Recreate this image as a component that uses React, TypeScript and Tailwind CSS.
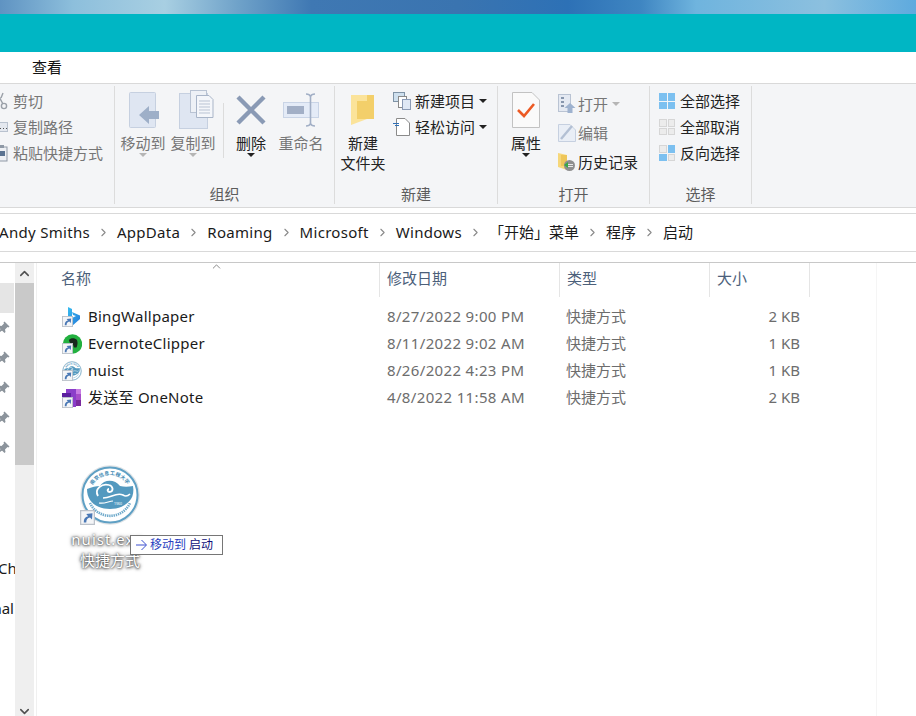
import React from "react";
import { ChevronRight, ChevronUp, ChevronDown } from "lucide-react";

const FONT = { fontFamily: '"Noto Sans", "Noto Sans CJK SC", sans-serif' };

const files = [
  { name: "BingWallpaper", date: "8/27/2022 9:00 PM", size: "2 KB", icon: "bing" },
  { name: "EvernoteClipper", date: "8/11/2022 9:02 AM", size: "1 KB", icon: "evernote" },
  { name: "nuist", date: "8/26/2022 4:23 PM", size: "1 KB", icon: "nuist" },
  { name: "发送至 OneNote", date: "4/8/2022 11:58 AM", size: "2 KB", icon: "onenote" },
];

const crumbs = [
  { label: "Andy Smiths", latin: true },
  { label: "AppData", latin: true },
  { label: "Roaming", latin: true },
  { label: "Microsoft", latin: true },
  { label: "Windows", latin: true },
  { label: "「开始」菜单", latin: false },
  { label: "程序", latin: false },
  { label: "启动", latin: false },
];

const ShortcutBadge = ({ size = 11 }: { size?: number }) => (
  <svg width={size} height={size} viewBox="0 0 12 12" className="absolute left-0 bottom-0">
    <rect x="0.5" y="0.5" width="11" height="11" fill="#f4f5f7" stroke="#bcc2ca" />
    <path d="M3 10 C3 7 4 5.5 6.5 5 L5 3.2 L10 2.6 L9.6 7.6 L8 6 C6 6.4 5 7.6 5 10 Z" fill="#4a78b5" />
  </svg>
);

const NuistLogo = ({ size }: { size: number }) => (
  <svg width={size} height={size} viewBox="0 0 60 60">
    <defs>
      <path id="logoTop" d="M12.7 20 A20 20 0 0 1 47.3 20" />
    </defs>
    <circle cx="30" cy="30" r="29.8" fill="#dfe3e6" />
    <circle cx="30" cy="30" r="27.5" fill="#fff" stroke="#5fa0c4" strokeWidth="2" />
    <text fontSize="5" fill="#3f8ab4" fontWeight="700" fontFamily="Noto Sans CJK SC, sans-serif">
      <textPath href="#logoTop" textLength="41">南京信息工程大学</textPath>
    </text>
    <path
      d="M7 24 C12 22 16 21 20 21 C24 14 35 14 40 21 C44 22 48 22 53 21 C54 26 53 31 51 34 C46 41 38 44 30 44 C22 44 14 41 10 35 C8 32 7 28 7 24 Z"
      fill="#5399bf"
    />
    <path d="M18 31 C14 24 22 18 29 20 C33 21 34 26 30 27 C27 27 27 24 29 24" stroke="#fff" strokeWidth="1.8" fill="none" />
    <path d="M23 33 C31 33 36 27 43 30 C46 32 48 31 50 29" stroke="#fff" strokeWidth="1.6" fill="none" />
    <path d="M19 38 C25 39 29 36 33 36" stroke="#fff" strokeWidth="1.2" fill="none" />
    <text x="34" y="39.5" fontSize="3.5" fill="#fff" fontFamily="Noto Sans, sans-serif">1960</text>
    <path d="M10 38 A22 22 0 0 0 50 38" stroke="#6faacb" strokeWidth="2.6" strokeDasharray="1.4 0.8" fill="none" />
  </svg>
);

const FileIcon = ({ kind }: { kind: string }) => (
  <span className="relative block w-[20px] h-[20px] shrink-0">
    {kind === "bing" && (
      <svg width="20" height="20" viewBox="0 0 20 20" className="absolute left-0 top-0">
        <defs>
          <linearGradient id="bingFill" x1="0" y1="0" x2="1" y2="1">
            <stop offset="0" stopColor="#37bdf0" />
            <stop offset="1" stopColor="#2478d8" />
          </linearGradient>
        </defs>
        <path d="M6 0 L10 2 V11 L14 9 L11 8 L10 5 L18 8.5 V12 L10 19 L6 17 Z" fill="url(#bingFill)" />
      </svg>
    )}
    {kind === "evernote" && (
      <svg width="20" height="20" viewBox="0 0 20 20" className="absolute left-0 top-0">
        <circle cx="10.5" cy="10" r="9.7" fill="#22b03f" />
        <path d="M7 6 C8.5 3.5 13 3.5 15 6 C16 8.5 15.5 11 14.5 13.5 H12 L11 10.5 L9 10 C8 8.5 7 8 7 6 Z" fill="#17281d" />
      </svg>
    )}
    {kind === "nuist" && <span className="absolute left-0 top-0"><NuistLogo size={20} /></span>}
    {kind === "onenote" && (
      <svg width="20" height="20" viewBox="0 0 20 20" className="absolute left-0 top-0">
        <path d="M4 1 H14 V19 H4 Z" fill="#8a3ec9" />
        <path d="M14 1 H19 V6 H14 Z" fill="#c77ce3" />
        <path d="M14 6 H19 V12 H14 Z" fill="#a64cc9" />
        <path d="M14 12 H19 V18 H14 Z" fill="#7a2a9e" />
        <path d="M0 5 H9 V14 H0 Z" fill="#5b1f9e" />
      </svg>
    )}
    <span className="absolute left-0 bottom-0 w-[11px] h-[11px] block">
      <ShortcutBadge />
    </span>
  </span>
);

const BigButton = ({
  label,
  icon,
  disabled,
  caret,
  width = "w-[50px]",
}: {
  label: React.ReactNode;
  icon: React.ReactNode;
  disabled?: boolean;
  caret?: boolean;
  width?: string;
}) => (
  <div className={`${width} flex flex-col items-center`}>
    <div className="h-[46px] flex items-center justify-center">{icon}</div>
    <div className={`text-[15px] leading-[20px] text-center whitespace-nowrap ${disabled ? "text-[#767676]" : "text-[#222]"}`}>{label}</div>
    {caret && (
      <div className={`w-0 h-0 border-x-[4px] border-x-transparent border-t-[4px] ${disabled ? "border-t-[#b5b5b5]" : "border-t-[#222]"}`} />
    )}
  </div>
);

const SmallRow = ({
  icon,
  label,
  disabled,
  caret,
  tight,
}: {
  icon: React.ReactNode;
  label: string;
  disabled?: boolean;
  caret?: "dark" | "light";
  tight?: boolean;
}) => (
  <div className="flex items-center h-[26px]">
    <span className="w-[18px] h-[18px] flex items-center justify-center shrink-0">{icon}</span>
    <span className={`${tight ? "ml-[2px]" : "ml-[4px]"} text-[15px] whitespace-nowrap ${disabled ? "text-[#767676]" : "text-[#222]"}`}>{label}</span>
    {caret && (
      <span className={`ml-[4px] w-0 h-0 border-x-[4px] border-x-transparent border-t-[4px] ${caret === "dark" ? "border-t-[#222]" : "border-t-[#b5b5b5]"}`} />
    )}
  </div>
);

const Group = ({ width, label, children }: { width: string; label: string; children: React.ReactNode }) => (
  <div className={`${width} h-[118px] mt-[2px] shrink-0 border-r border-[#dcdcdc] flex flex-col overflow-hidden`}>
    <div className="flex-1 min-h-0 flex">{children}</div>
    <div className="h-[20px] text-[15px] text-center text-[#5c5c5c] leading-[20px]">{label}</div>
  </div>
);

const GridIcon = ({ cells }: { cells: string[] }) => (
  <span className="grid grid-cols-2 gap-px w-[16px] h-[16px]">
    {cells.map((c, i) => (
      <span key={i} className={c === "b" ? "bg-[#7cc0f0]" : "bg-[#ececec] border border-[#d6d6d6]"} />
    ))}
  </span>
);

const PinIcon = () => (
  <svg width="14" height="14" viewBox="0 0 14 14" className="-ml-[4px]">
    <path d="M8.5 0.5 L13.5 5.5 L12.5 6.5 L11.5 6 L9 8.5 L9.5 11 L8.5 12 L2 5.5 L3 4.5 L5.5 5 L8 2.5 L7.5 1.5 Z M4.5 8 L1 13 L6 9.5 Z" fill="#8c949c" />
  </svg>
);

export default function App() {
  return (
    <div className="w-[916px] h-[716px] overflow-hidden bg-white flex flex-col relative" style={FONT}>
      {/* wallpaper + title bar */}
      <div className="h-[14px] shrink-0 bg-[linear-gradient(90deg,#5f93c2_0%,#8dbfdc_8%,#a8cfe2_18%,#6fa2c9_26%,#3f78b3_34%,#3a74b0_50%,#2d71b6_62%,#3f86c2_70%,#6fb4de_76%,#8cc0df_90%,#5eaade_100%)]" />
      <div className="h-[38px] shrink-0 bg-[#00b6c4]" />
      <div className="h-[31px] shrink-0 flex items-center pl-[32px] text-[15px] text-[#111] pb-[1px]">查看</div>

      {/* ribbon */}
      <div className="h-[125px] shrink-0 bg-[#f4f5f7] border-y border-[#d9d9d9] flex">
        <Group width="w-[115px]" label="">
          <div className="flex flex-col -ml-[9px] pt-[2px]">
            <SmallRow
              disabled
              label="剪切"
              icon={
                <svg width="16" height="18" viewBox="0 0 16 18">
                  <path d="M5 1 L11 12 M11 1 L9 6" stroke="#9aa0a8" strokeWidth="1.4" fill="none" />
                  <circle cx="12" cy="14" r="2.6" stroke="#9aa0a8" fill="none" strokeWidth="1.4" />
                </svg>
              }
            />
            <SmallRow
              disabled
              label="复制路径"
              icon={
                <svg width="16" height="12" viewBox="0 0 16 12">
                  <rect x="0.5" y="1.5" width="15" height="9" fill="#e4e8ef" stroke="#b9c2cf" />
                  <path d="M8 7.5 H9 M11 7.5 H12 M14 7.5 H15" stroke="#555" />
                </svg>
              }
            />
            <SmallRow
              disabled
              label="粘贴快捷方式"
              icon={
                <svg width="16" height="18" viewBox="0 0 16 18">
                  <rect x="4" y="3" width="11" height="14" fill="#eef0f4" stroke="#8f99a6" />
                  <rect x="7" y="1" width="5" height="3" fill="#8f99a6" />
                  <rect x="8" y="7" width="5" height="5" fill="#5b7391" />
                </svg>
              }
            />
          </div>
        </Group>

        <Group width="w-[220px]" label="组织">
          <div className="flex pl-[3px] pt-[1px]">
            <BigButton
              disabled
              caret
              label="移动到"
              icon={
                <svg width="34" height="38" viewBox="0 0 34 38">
                  <rect x="3.5" y="1.5" width="26" height="35" rx="1" fill="#dfe6f2" stroke="#c6d0e0" />
                  <path d="M13 24 L23 15 V20 H33 V28 H23 V33 Z" fill="#9eafc8" />
                </svg>
              }
            />
            <BigButton
              disabled
              caret
              label="复制到"
              icon={
                <svg width="36" height="40" viewBox="0 0 36 40" className="ml-[5px]">
                  <rect x="1.5" y="3.5" width="28" height="35" fill="#dfe6f2" stroke="#c6d0e0" />
                  <rect x="12.5" y="0.5" width="16" height="22" fill="#eef1f6" stroke="#b9c3d3" />
                  <path d="M18.5 5.5 H31 L35 9.5 V27.5 H18.5 Z" fill="#f4f6fa" stroke="#a9b5c8" />
                  <path d="M21 11 H32 M21 14 H32 M21 17 H32 M21 20 H32 M21 23 H32" stroke="#b9c3d3" />
                </svg>
              }
            />
            <div className="w-px h-[55px] bg-[#dcdcdc] mt-[16px] ml-[5px]" />
            <BigButton
              caret
              label="删除"
              width="w-[50px] ml-[2px]"
              icon={
                <svg width="32" height="32" viewBox="0 0 32 32">
                  <path d="M3 3 L29 29 M29 3 L3 29" stroke="#8a9ab5" strokeWidth="4.4" />
                </svg>
              }
            />
            <BigButton
              disabled
              label="重命名"
              icon={
                <svg width="38" height="34" viewBox="0 0 38 34">
                  <rect x="1.5" y="9.5" width="35" height="15" fill="#e4ebf7" stroke="#c9d4e6" />
                  <rect x="5" y="13" width="17" height="8" fill="#a2afc6" />
                  <path d="M24 1 C26 1 28 2 28.5 3.5 C29 2 31 1 33 1 M28.5 3.5 V30.5 M24 33 C26 33 28 32 28.5 30.5 C29 32 31 33 33 33" stroke="#a2afc6" strokeWidth="1.6" fill="none" />
                </svg>
              }
            />
          </div>
        </Group>

        <Group width="w-[163px]" label="新建">
          <div className="flex pt-[1px]">
            <BigButton
              width="w-[56px]"
              label={<>新建<br />文件夹</>}
              icon={
                <svg width="26" height="32" viewBox="0 0 26 32">
                  <path d="M1 1 L17 1 V25 L1 31 Z" fill="#fbe39a" />
                  <path d="M7 7 L17 7 V1 H24 V25 H7 Z" fill="#f3cf6a" />
                </svg>
              }
            />
            <div className="flex flex-col ml-[2px] -mt-[1px] pt-[2px]">
              <SmallRow
                label="新建项目"
                caret="dark"
                icon={
                  <svg width="18" height="18" viewBox="0 0 18 18">
                    <rect x="0.5" y="0.5" width="11" height="9" fill="#cfe0ee" stroke="#7f93a6" />
                    <rect x="5.5" y="4.5" width="8" height="11" fill="#fff" stroke="#8a8a8a" />
                    <rect x="9.5" y="7.5" width="8" height="10" fill="#dfe8f5" stroke="#8a9ab5" />
                  </svg>
                }
              />
              <SmallRow
                label="轻松访问"
                caret="dark"
                icon={
                  <svg width="18" height="18" viewBox="0 0 18 18">
                    <path d="M3.5 0.5 H12 L16.5 5 V17.5 H3.5 Z" fill="#fff" stroke="#8a8a8a" />
                    <path d="M0 5.5 H6 M2 7.5 H6" stroke="#2f6fb5" />
                  </svg>
                }
              />
            </div>
          </div>
        </Group>

        <Group width="w-[152px]" label="打开">
          <div className="flex">
            <BigButton
              caret
              width="w-[56px] pt-[1px]"
              label="属性"
              icon={
                <svg width="28" height="36" viewBox="0 0 28 36">
                  <path d="M0.5 0.5 H20 L27.5 8 V35.5 H0.5 Z" fill="#fafafa" stroke="#c2c2c2" />
                  <path d="M6 18 L12 24 L22 12" stroke="#ec5a24" strokeWidth="2.6" fill="none" />
                </svg>
              }
            />
            <div className="flex flex-col ml-[4px] pt-[5px] gap-[3px]">
              <SmallRow
                tight
                disabled
                label="打开"
                caret="light"
                icon={
                  <svg width="18" height="20" viewBox="0 0 18 20">
                    <rect x="0.5" y="0.5" width="12" height="17" fill="#e4e9f2" stroke="#b9c3d3" />
                    <path d="M3 4 H6 M3 8 H6 M3 12 H6" stroke="#8796ad" strokeWidth="2" />
                    <path d="M12 9 L17.5 14 H14.5 V19 H9.5 V14 H6.5 Z" fill="#9eb2cf" />
                  </svg>
                }
              />
              <SmallRow
                tight
                disabled
                label="编辑"
                icon={
                  <svg width="18" height="20" viewBox="0 0 18 20">
                    <path d="M0.5 1.5 H12 L17.5 7 V18.5 H0.5 Z" fill="#e9eef6" stroke="#c6d0e0" />
                    <path d="M3 16 L14 3" stroke="#b3c0d4" strokeWidth="2.4" />
                  </svg>
                }
              />
              <SmallRow
                tight
                label="历史记录"
                icon={
                  <svg width="18" height="20" viewBox="0 0 18 20">
                    <path d="M0 1 L9 3 V18 L0 15 Z" fill="#f6d77a" />
                    <path d="M3 3 H9 V14 H3 Z" fill="#eec65a" />
                    <circle cx="11.5" cy="13.5" r="5.5" fill="#8f8f8f" />
                    <path d="M6 13 L10 10 V16 Z" fill="#39a845" />
                    <path d="M10 12.5 H15 M10 14.5 H15" stroke="#e8e8e8" />
                  </svg>
                }
              />
            </div>
          </div>
        </Group>

        <Group width="w-[102px]" label="选择">
          <div className="flex flex-col pl-[8px] pt-[2px]">
            <SmallRow label="全部选择" icon={<GridIcon cells={["b", "b", "b", "b"]} />} />
            <SmallRow label="全部取消" icon={<GridIcon cells={["g", "g", "g", "g"]} />} />
            <SmallRow label="反向选择" icon={<GridIcon cells={["g", "b", "b", "g"]} />} />
          </div>
        </Group>
      </div>

      {/* address bar */}
      <div className="h-[5px] shrink-0" />
      <div className="h-[39px] shrink-0 border-y border-[#d9d9d9] flex items-center text-[15px] text-[#1a1a1a] whitespace-nowrap -ml-[1px]">
        {crumbs.map((c, i) => (
          <React.Fragment key={c.label}>
            <span className={c.latin ? "tracking-[0.3px]" : ""}>{c.label}</span>
            {i < crumbs.length - 1 && (
              <span className="w-[27px] flex justify-center shrink-0">
                <ChevronRight size={13} strokeWidth={2} className="text-[#8a8a8a]" />
              </span>
            )}
          </React.Fragment>
        ))}
      </div>
      <div className="h-[10px] shrink-0" />

      {/* content */}
      <div className="flex-1 min-h-0 border-t border-[#c8c8c8] flex">
        {/* nav pane, clipped at the left edge */}
        <div className="w-[15px] shrink-0 overflow-hidden flex flex-col pt-[20px] text-[15px] text-[#1a1a1a]">
          <div className="h-[30px] w-[14px] bg-[#e5e5e5] shrink-0" />
          {[0, 1, 2, 3, 4].map((i) => (
            <div key={i} className="h-[30px] flex items-center shrink-0">
              <PinIcon />
            </div>
          ))}
          <div className="h-[90px] shrink-0" />
          <div className="h-[30px] leading-[30px] -ml-[2px] whitespace-nowrap shrink-0">Che</div>
          <div className="h-[10px] shrink-0" />
          <div className="h-[30px] leading-[30px] w-[14px] flex justify-end shrink-0">nal</div>
        </div>

        {/* nav scrollbar */}
        <div className="w-[19px] shrink-0 bg-[#efefef] flex flex-col">
          <div className="h-[20px] flex items-center justify-center">
            <ChevronUp size={15} strokeWidth={2.5} className="text-[#505050]" />
          </div>
          <div className="h-[182px] bg-[#c9c9c9]" />
          <div className="flex-1" />
          <div className="h-[10px] flex justify-center overflow-hidden">
            <ChevronDown size={15} strokeWidth={2.5} className="text-[#505050] -mt-[2px]" />
          </div>
        </div>
        <div className="w-[2px] shrink-0" />
        <div className="w-px shrink-0 bg-[#f0f0f0]" />

        {/* file list */}
        <div className="flex-1 min-w-0 relative">
          <div className="h-[34px] flex text-[15px] text-[#4c607a]">
            <div className="w-[343px] pl-[24px] pt-[4px] border-r border-[#e5e5e5] relative">
              名称
              <ChevronUp size={13} strokeWidth={1.4} className="absolute left-[173px] -top-[3px] text-[#666]" />
            </div>
            <div className="w-[180px] pl-[7px] pt-[4px] border-r border-[#e5e5e5]">修改日期</div>
            <div className="w-[150px] pl-[7px] pt-[4px] border-r border-[#e5e5e5]">类型</div>
            <div className="w-[100px] pl-[7px] pt-[4px] border-r border-[#e5e5e5]">大小</div>
          </div>
          <div className="pt-[6px] flex flex-col text-[15px]">
            {files.map((f) => (
              <div key={f.name} className="h-[27px] flex items-center whitespace-nowrap">
                <div className="w-[343px] pl-[25px] flex items-center gap-[6px] text-[#1a1a1a]">
                  <FileIcon kind={f.icon} />
                  <span className="tracking-[0.25px]">{f.name}</span>
                </div>
                <div className="w-[180px] pl-[7px] tracking-[0.35px] text-[#6d6d6d]">{f.date}</div>
                <div className="w-[149px] pl-[6px] text-[#6d6d6d]">快捷方式</div>
                <div className="w-[91px] text-right text-[#6d6d6d]">{f.size}</div>
              </div>
            ))}
          </div>
          <div className="absolute left-[839px] top-0 bottom-0 w-px bg-[#f5f5f5]" />
        </div>
      </div>

      {/* drag ghost */}
      <div className="absolute left-[80px] top-[465px] w-[60px] h-[60px]">
        <NuistLogo size={60} />
        <div className="absolute left-0 bottom-0 w-[15px] h-[15px]">
          <ShortcutBadge size={15} />
        </div>
      </div>
      <div className="absolute left-[60px] top-[529px] w-[100px] text-center text-[15px] leading-[21px] text-white [text-shadow:0_0_2px_#444,0_0_4px_#666,0_1px_3px_#777]">
        <div className="-ml-[5px] tracking-[1px]">nuist.exe</div>
        <div>快捷方式</div>
      </div>

      {/* drop tooltip */}
      <div className="absolute left-[130px] top-[535px] w-[93px] h-[20px] bg-white border border-[#767676] flex items-center pl-[4px] text-[12px] whitespace-nowrap">
        <svg width="13" height="12" viewBox="0 0 13 12" className="shrink-0">
          <path d="M1 6 H11 M6.5 1 L11.5 6 L6.5 11" stroke="#3b4fd0" strokeWidth="1" fill="none" />
        </svg>
        <span className="ml-[2px] text-[#2a3fc0]">移动到</span>
        <span className="ml-[3px] text-[#10107a]">启动</span>
      </div>
    </div>
  );
}
